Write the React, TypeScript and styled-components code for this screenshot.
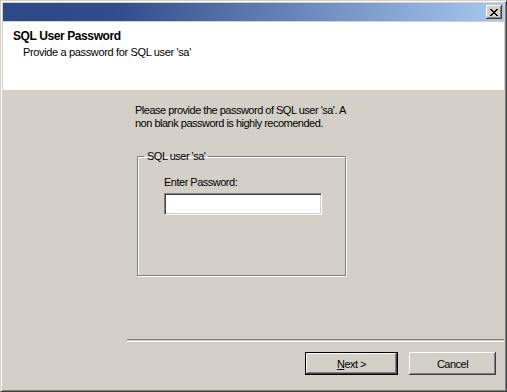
import React from 'react';
import styled, { createGlobalStyle } from 'styled-components';

const GlobalStyle = createGlobalStyle`
  html, body {
    margin: 0;
    padding: 0;
    background: #d4d0c8;
  }
  body {
    font-family: Tahoma, 'Liberation Sans', Arial, sans-serif;
    font-size: 11px;
    letter-spacing: -0.5px;
    color: #000;
  }
`;

const Window = styled.div`
  box-sizing: border-box;
  width: 507px;
  height: 392px;
  display: flex;
  flex-direction: column;
  background: #d4d0c8;
  border-top: 1px solid #d4d0c8;
  border-left: 1px solid #d4d0c8;
  border-right: 1px solid #404040;
  border-bottom: 1px solid #404040;
  box-shadow: inset 1px 1px 0 #fff, inset -1px -1px 0 #808080;
  padding: 2px;
`;

const TitleBar = styled.div`
  height: 18px;
  flex: none;
  display: flex;
  align-items: center;
  justify-content: flex-end;
  padding-right: 2px;
  background: linear-gradient(to right, #2b4888 0%, #2f4c8b 22%, #a6caf0 100%);
  margin-bottom: 1px;
`;

const CloseButton = styled.button`
  box-sizing: border-box;
  width: 16px;
  height: 14px;
  padding: 0;
  margin: 0;
  display: flex;
  align-items: center;
  justify-content: center;
  background: #d4d0c8;
  border: none;
  box-shadow: inset -1px -1px 0 #404040, inset 1px 1px 0 #fff,
    inset -2px -2px 0 #808080;
`;

const Header = styled.div`
  height: 68px;
  flex: none;
  background: #fff;
  padding: 7px 0 0 10px;
  box-sizing: border-box;
`;

const Heading = styled.div`
  font-weight: bold;
  font-size: 12px;
  letter-spacing: -0.4px;
  line-height: 14px;
`;

const SubHeading = styled.div`
  padding-left: 10px;
  line-height: 13px;
  margin-top: 3px;
  letter-spacing: -0.35px;
`;

const Body = styled.div`
  flex: 1;
  padding: 14px 0 0 132px;
`;

const Intro = styled.p`
  margin: 0;
  width: 240px;
  line-height: 13px;
`;

const Group = styled.fieldset`
  box-sizing: border-box;
  width: 209px;
  height: 126px;
  margin: 20px 0 0 2px;
  padding: 0;
  border: 1px solid #808080;
  box-shadow: inset 1px 1px 0 #fff, 1px 1px 0 #fff;
`;

const Legend = styled.legend`
  padding: 0 3px;
  margin-left: 6px;
  line-height: 13px;
`;

const GroupContent = styled.div`
  padding: 13px 0 0 26px;
`;

const FieldLabel = styled.label`
  display: block;
  line-height: 13px;
  margin-bottom: 4px;
`;

const PasswordInput = styled.input`
  box-sizing: border-box;
  width: 158px;
  height: 22px;
  margin: 0;
  background: #fff;
  border-top: 1px solid #808080;
  border-left: 1px solid #808080;
  border-right: 1px solid #fff;
  border-bottom: 1px solid #fff;
  box-shadow: inset 1px 1px 0 #404040, inset -1px -1px 0 #d4d0c8;
  outline: none;
`;

const Footer = styled.div`
  flex: none;
  height: 50px;
  display: flex;
  flex-direction: column;
  align-items: flex-end;
`;

const Separator = styled.div`
  width: 377px;
  height: 1px;
  border-top: 1px solid #808080;
  border-bottom: 1px solid #fff;
`;

const ButtonRow = styled.div`
  display: flex;
  gap: 11px;
  padding: 10px 8px 0 0;
`;

const Button = styled.button<{ $default?: boolean }>`
  box-sizing: border-box;
  width: ${(p) => (p.$default ? 93 : 87)}px;
  height: 23px;
  padding: 0;
  margin: 0;
  font-family: inherit;
  font-size: 11px;
  letter-spacing: -0.5px;
  color: #000;
  background: #d4d0c8;
  border: ${(p) => (p.$default ? '1px solid #000' : 'none')};
  box-shadow: inset -1px -1px 0 #404040, inset 1px 1px 0 #fff,
    inset -2px -2px 0 #808080;
  u {
    text-decoration: underline;
  }
`;

const CloseGlyph = () => (
  <svg width="8" height="7" viewBox="0 0 8 7" shapeRendering="crispEdges">
    <path
      d="M0 0h2v1h-2zM6 0h2v1h-2zM1 1h2v1h-2zM5 1h2v1h-2zM2 2h4v1h-4zM3 3h2v1h-2zM2 4h4v1h-4zM1 5h2v1h-2zM5 5h2v1h-2zM0 6h2v1h-2zM6 6h2v1h-2z"
      fill="#000"
    />
  </svg>
);

const App = () => {
  return (
    <>
      <GlobalStyle />
      <Window>
        <TitleBar>
          <CloseButton aria-label="Close">
            <CloseGlyph />
          </CloseButton>
        </TitleBar>

        <Header>
          <Heading>SQL User Password</Heading>
          <SubHeading>Provide a password for SQL user 'sa'</SubHeading>
        </Header>

        <Body>
          <Intro>
            Please provide the password of SQL user 'sa'. A
            <br />
            non blank password is highly recomended.
          </Intro>

          <Group>
            <Legend>SQL user 'sa'</Legend>
            <GroupContent>
              <FieldLabel htmlFor="pwd">Enter Password:</FieldLabel>
              <PasswordInput id="pwd" type="password" />
            </GroupContent>
          </Group>
        </Body>

        <Footer>
          <Separator />
          <ButtonRow>
            <Button $default>
              <u>N</u>ext &gt;
            </Button>
            <Button>Cancel</Button>
          </ButtonRow>
        </Footer>
      </Window>
    </>
  );
};

export default App;
